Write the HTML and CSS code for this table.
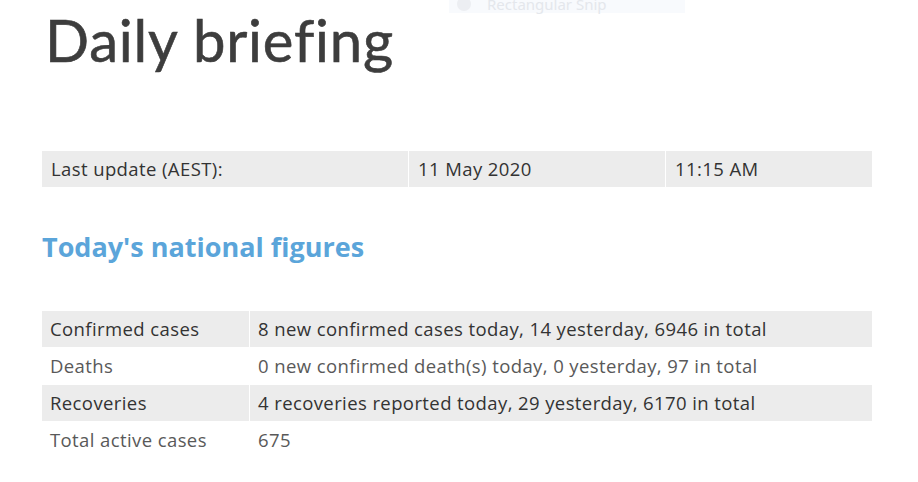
FILE: index.html
```html
<!DOCTYPE html>
<html lang="en">
<head>
<meta charset="utf-8">
<title>Daily briefing</title>
<link rel="stylesheet" href="styles.css">
</head>
<body>
<div class="snip" aria-hidden="true">
  <span class="snip-icon"></span>
  <span class="snip-text">Rectangular Snip</span>
</div>
<main class="page">
  <h1 class="title">Daily briefing</h1>
  <table class="meta">
    <tr>
      <td class="c1">Last update (AEST):</td>
      <td class="c2">11 May 2020</td>
      <td class="c3">11:15 AM</td>
    </tr>
  </table>
  <h2 class="heading">Today's national figures</h2>
  <table class="figures">
    <tr class="shade">
      <td class="label">Confirmed cases</td>
      <td>8 new confirmed cases today, 14 yesterday, 6946 in total</td>
    </tr>
    <tr class="plain">
      <td class="label">Deaths</td>
      <td>0 new confirmed death(s) today, 0 yesterday, 97 in total</td>
    </tr>
    <tr class="shade">
      <td class="label">Recoveries</td>
      <td>4 recoveries reported today, 29 yesterday, 6170 in total</td>
    </tr>
    <tr class="plain">
      <td class="label">Total active cases</td>
      <td>675</td>
    </tr>
  </table>
</main>
</body>
</html>
```
FILE: styles.css
```css
html, body {
  margin: 0;
  padding: 0;
  background: #ffffff;
}
body {
  font-family: "Open Sans", "Noto Sans", sans-serif;
  color: #333333;
}
.page {
  padding: 0 46px 0 42px;
}
.title {
  margin: 0;
  padding-top: 5px;
  padding-left: 3px;
  font-family: "Lato", sans-serif;
  font-weight: 400;
  font-size: 58px;
  line-height: 70px;
  color: #3d3d3d;
  letter-spacing: 0.8px;
  -webkit-text-stroke: 0.6px #3d3d3d;
}
.meta, .figures {
  width: 830px;
  border-collapse: separate;
  border-spacing: 0;
  font-size: 18.5px;
  letter-spacing: 0.4px;
}
.meta {
  margin-top: 76px;
}
.meta td {
  background: #ececec;
  height: 36px;
  padding: 0 9px 1px 9px;
  box-sizing: border-box;
  color: #333333;
}
.meta .c1 { width: 367px; border-right: 1px solid #ffffff; }
.meta .c2 { width: 257px; border-right: 1px solid #ffffff; }
.heading {
  margin: 40px 0 0 0;
  font-family: "Open Sans", sans-serif;
  font-weight: 700;
  font-size: 27px;
  line-height: 40px;
  color: #5ba5da;
  letter-spacing: 0;
}
.figures {
  margin-top: 43px;
  border-spacing: 0 1px;
}
.figures td {
  height: 36px;
  padding: 0 8px 1px 8px;
  box-sizing: border-box;
}
.figures .label {
  width: 208px;
  border-right: 1px solid #ffffff;
}
.figures .shade td {
  background: #ececec;
  color: #333333;
}
.figures .plain td {
  background: #ffffff;
  color: #595959;
}
.snip {
  position: absolute;
  left: 449px;
  top: -5px;
  width: 236px;
  height: 18px;
  background: #f8fafd;
  display: flex;
  align-items: center;
  gap: 16px;
  padding-left: 8px;
  box-sizing: border-box;
  font-family: "Noto Sans", sans-serif;
  font-size: 15px;
  line-height: 18px;
  color: #e4e7ec;
}
.snip-icon {
  width: 14px;
  height: 14px;
  border-radius: 50%;
  background: #eceef2;
}
```
